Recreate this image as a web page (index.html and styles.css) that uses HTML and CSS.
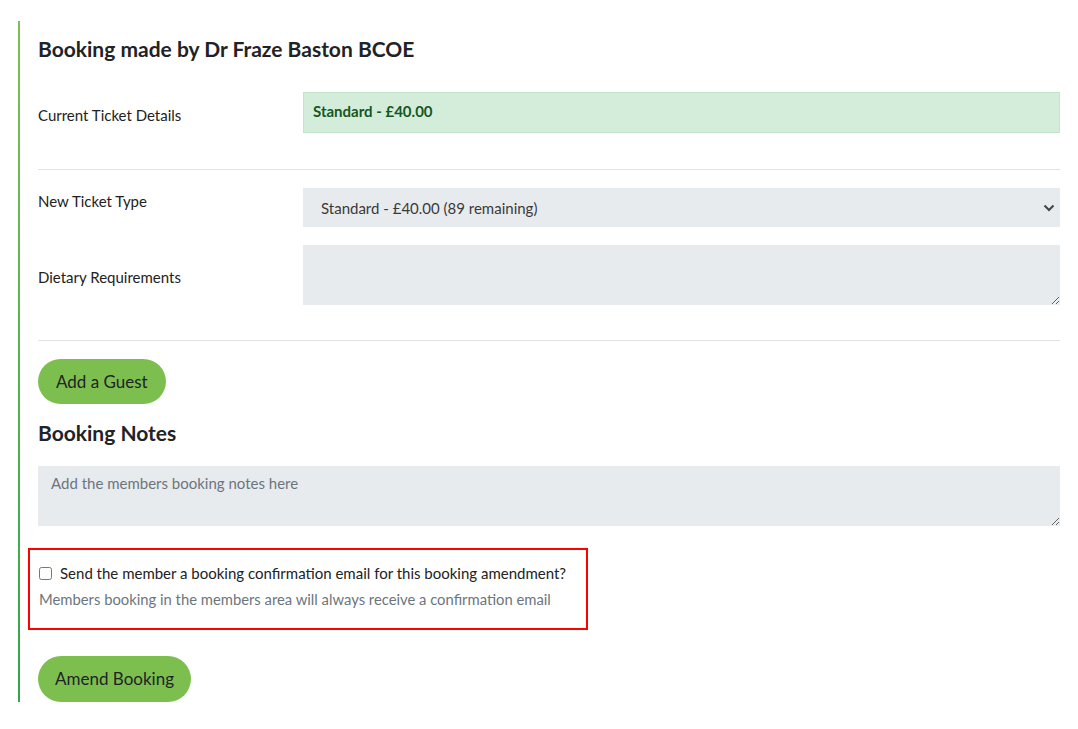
FILE: index.html
```html
<!DOCTYPE html>
<html lang="en">
<head>
<meta charset="utf-8">
<title>Amend Booking</title>
<link rel="stylesheet" href="styles.css">
</head>
<body>
<div class="panel">
  <h2 class="title">Booking made by Dr Fraze Baston BCOE</h2>

  <div class="row row-current">
    <div class="label">Current Ticket Details</div>
    <div class="field"><div class="ticket">Standard - £40.00</div></div>
  </div>

  <hr class="divider divider-1">

  <div class="row row-type">
    <div class="label label-type">New Ticket Type</div>
    <div class="field select-wrap">
      <select class="select">
        <option>Standard - £40.00 (89 remaining)</option>
      </select>
      <svg class="chevron" width="12" height="8" viewBox="0 0 12 8"><path d="M1.5 1.5 L6 6 L10.5 1.5" fill="none" stroke="#444" stroke-width="2"/></svg>
    </div>
  </div>

  <div class="row row-diet">
    <div class="label label-diet">Dietary Requirements</div>
    <div class="field"><textarea class="textarea textarea-diet"></textarea></div>
  </div>

  <hr class="divider divider-2">

  <button class="btn btn-guest">Add a Guest</button>

  <h2 class="title title-notes">Booking Notes</h2>
  <textarea class="textarea textarea-notes" placeholder="Add the members booking notes here"></textarea>

  <div class="notice">
    <label class="check">
      <input type="checkbox" class="checkbox">
      <span>Send the member a booking confirmation email for this booking amendment?</span>
    </label>
    <p class="help">Members booking in the members area will always receive a confirmation email</p>
  </div>

  <button class="btn btn-amend">Amend Booking</button>
</div>
</body>
</html>
```

FILE: styles.css
```css
* { box-sizing: border-box; }

body {
  margin: 0;
  background: #fff;
  font-family: Lato, "Open Sans", "Liberation Sans", sans-serif;
  color: #222;
}

.panel {
  margin: 21px 0 0 18px;
  width: 1042px;
  padding: 16px 0 0 18px;
  border-left: 2px solid transparent;
  border-image: linear-gradient(to bottom, #7dc151, #2ea84a) 1;
  display: flex;
  flex-direction: column;
  align-items: flex-start;
}

.title {
  margin: 0;
  font-size: 21px;
  line-height: 24px;
  font-weight: 700;
  color: #1f2326;
}

.row {
  display: grid;
  grid-template-columns: 265px 1fr;
  width: 100%;
  align-items: start;
}

.label {
  font-size: 15px;
  line-height: 20px;
  color: #222;
}

.row-current { margin-top: 31px; }
.row-current .label { padding-top: 13px; }

.ticket {
  background: #d4edda;
  border: 1px solid #c3e6cb;
  color: #155724;
  font-weight: 700;
  font-size: 15px;
  line-height: 21px;
  padding: 8px 9px 10px;
  height: 41px;
}

.divider {
  width: 100%;
  border: 0;
  border-top: 1px solid #e3e3e3;
  margin: 0;
}
.divider-1 { margin-top: 36px; }
.divider-2 { margin-top: 35px; }

.row-type { margin-top: 18px; }
.label-type { padding-top: 3px; }

.select-wrap { position: relative; }

.select {
  appearance: none;
  -webkit-appearance: none;
  width: 100%;
  height: 39px;
  border: 0;
  border-radius: 0;
  background: #e8ebee;
  font-family: inherit;
  font-size: 15px;
  color: #3a3a3a;
  padding: 0 18px;
  outline: none;
}

.chevron {
  position: absolute;
  right: 5px;
  top: 16px;
  pointer-events: none;
}

.row-diet { margin-top: 18px; }
.label-diet { padding-top: 22px; }

.textarea {
  display: block;
  width: 100%;
  height: 60px;
  border: 0;
  border-radius: 0;
  background: #e8ebee;
  font-family: inherit;
  font-size: 15px;
  line-height: 20px;
  color: #333;
  padding: 7px 13px;
  outline: none;
}
.textarea::placeholder { color: #6c757d; }

.btn {
  border: 0;
  border-radius: 999px;
  background: #7dbf4f;
  color: #1f2326;
  font-family: inherit;
  font-size: 17px;
  line-height: 20px;
  cursor: pointer;
}

.btn-guest {
  margin-top: 18px;
  height: 45px;
  padding: 0 18px;
}

.title-notes { margin-top: 17px; }

.textarea-notes { margin-top: 21px; }

.notice {
  margin: 22px 0 0 -10px;
  width: 560px;
  border: 2px solid #f00;
  padding: 13px 9px 19px;
}

.check {
  display: flex;
  align-items: center;
  gap: 8px;
  font-size: 15px;
  line-height: 20px;
  color: #222;
}

.checkbox {
  margin: 0;
  width: 13px;
  height: 13px;
}

.help {
  margin: 6px 0 0;
  font-size: 14.8px;
  line-height: 20px;
  color: #6c757d;
}

.btn-amend {
  margin-top: 26px;
  height: 46px;
  padding: 0 17px;
}
```
